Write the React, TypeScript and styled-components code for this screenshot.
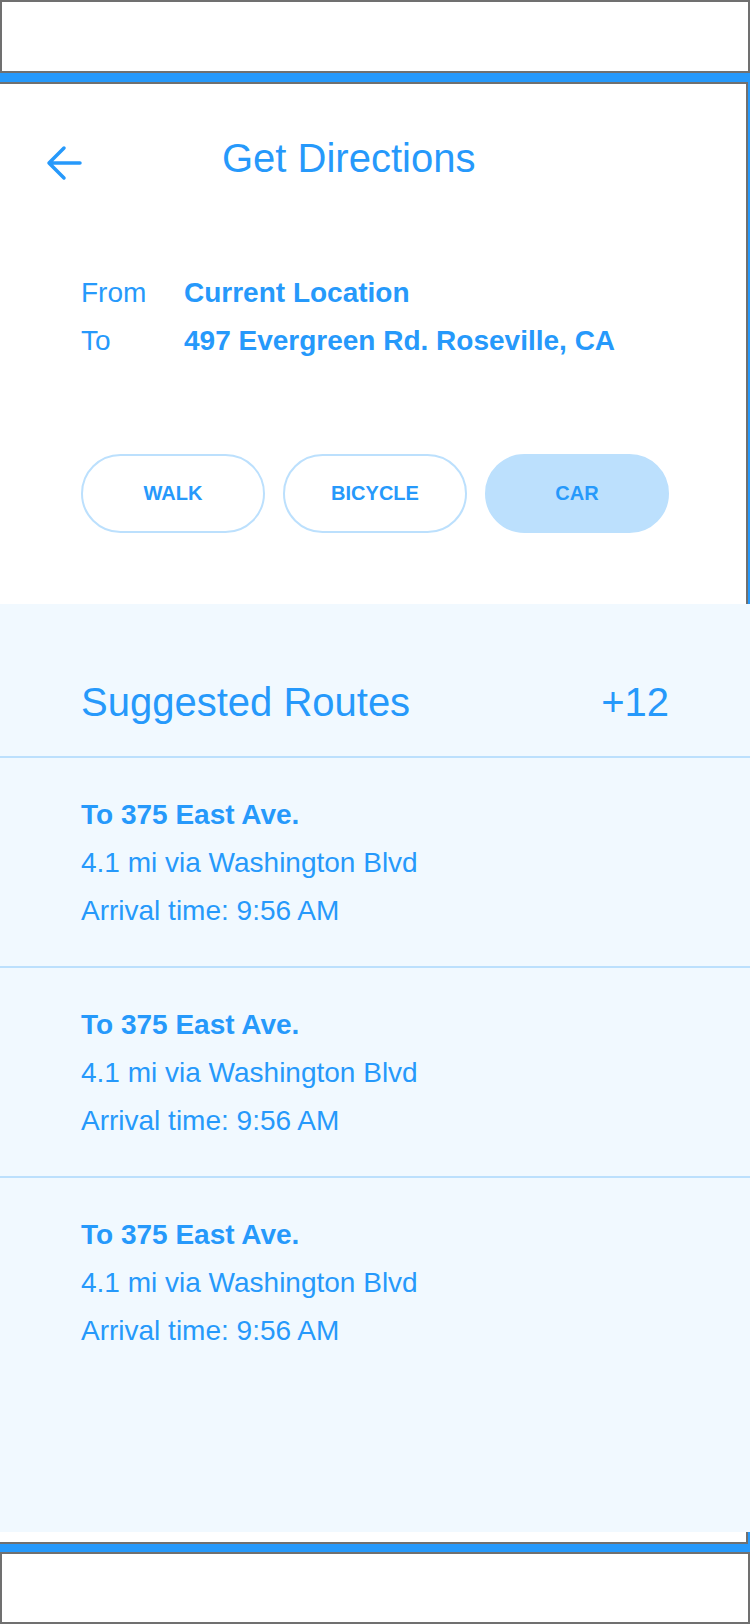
import React from "react";
import styled, { createGlobalStyle } from "styled-components";

const Global = createGlobalStyle`
  html, body { margin: 0; padding: 0; }
  body {
    background: #2699fb;
    font-family: "Liberation Sans", Arial, sans-serif;
    color: #2699fb;
    overflow-x: hidden;
  }
  * { box-sizing: border-box; }
`;

const Screen = styled.div`
  width: 750px;
  height: 1624px;
  display: flex;
  flex-direction: column;
  overflow: hidden;
`;

const Bar = styled.div<{ $h: number }>`
  flex: none;
  width: 750px;
  height: ${(p) => p.$h}px;
  background: #ffffff;
  border: 2px solid #707070;
`;

const Panel = styled.div`
  flex: none;
  width: 750px;
  height: 1462px;
  margin: 9px 0 8px -2px;
  background: #ffffff;
  border: 2px solid #707070;
  display: flex;
  flex-direction: column;
`;

const Header = styled.div`
  display: flex;
  align-items: center;
  padding: 55px 0 0 48px;
  height: 103px;
`;

const BackButton = styled.button`
  width: 36px;
  height: 36px;
  padding: 0;
  margin: 0 0 0 -2px;
  border: none;
  background: none;
  display: flex;
  cursor: pointer;
`;

const Title = styled.h1`
  margin: -11px 0 0 140px;
  font-size: 40px;
  line-height: 48px;
  font-weight: 400;
  color: #2699fb;
`;

const Addresses = styled.div`
  margin: 82px 0 0 81px;
  display: grid;
  grid-template-columns: 103px auto;
  font-size: 28px;
  line-height: 48px;
`;

const Label = styled.span`
  font-weight: 400;
`;

const Value = styled.span`
  font-weight: 700;
`;

const Modes = styled.div`
  display: flex;
  gap: 18px;
  margin: 89px 0 0 81px;
`;

const ModeButton = styled.button<{ $active?: boolean }>`
  width: 184px;
  height: 79px;
  border-radius: 40px;
  border: 2px solid #bce0fd;
  background: ${(p) => (p.$active ? "#bce0fd" : "#ffffff")};
  color: #2699fb;
  font-family: "Liberation Sans", Arial, sans-serif;
  font-size: 20px;
  font-weight: 700;
  cursor: pointer;
`;

const Routes = styled.section`
  margin: 71px -4px 0 0;
  height: 928px;
  background: #f1f9ff;
`;

const RoutesHeader = styled.div`
  display: flex;
  justify-content: space-between;
  align-items: center;
  padding: 74px 81px 30px 81px;
  font-size: 40px;
  line-height: 48px;
  border-bottom: 2px solid #bce0fd;
`;

const RoutesTitle = styled.h2`
  margin: 0;
  font-size: 40px;
  font-weight: 400;
  line-height: 48px;
`;

const Count = styled.span``;

const RouteItem = styled.div<{ $last?: boolean }>`
  padding: 33px 0 31px 81px;
  font-size: 28px;
  line-height: 48px;
  border-bottom: ${(p) => (p.$last ? "none" : "2px solid #bce0fd")};
`;

const RouteName = styled.div`
  font-weight: 700;
`;

const RouteLine = styled.div``;

const routes = [1, 2, 3];

export default function App() {
  return (
    <>
      <Global />
      <Screen>
        <Bar $h={73} />
        <Panel>
          <Header>
            <BackButton aria-label="Back">
              <svg width="36" height="36" viewBox="0 0 36 36" fill="none">
                <path
                  d="M18 3 L3 18 L18 33 M3 18 H34"
                  stroke="#2699fb"
                  strokeWidth="3.5"
                  strokeLinecap="round"
                  strokeLinejoin="round"
                />
              </svg>
            </BackButton>
            <Title>Get Directions</Title>
          </Header>
          <Addresses>
            <Label>From</Label>
            <Value>Current Location</Value>
            <Label>To</Label>
            <Value>497 Evergreen Rd. Roseville, CA</Value>
          </Addresses>
          <Modes>
            <ModeButton>WALK</ModeButton>
            <ModeButton>BICYCLE</ModeButton>
            <ModeButton $active>CAR</ModeButton>
          </Modes>
          <Routes>
            <RoutesHeader>
              <RoutesTitle>Suggested Routes</RoutesTitle>
              <Count>+12</Count>
            </RoutesHeader>
            {routes.map((r, i) => (
              <RouteItem key={r} $last={i === routes.length - 1}>
                <RouteName>To 375 East Ave.</RouteName>
                <RouteLine>4.1 mi via Washington Blvd</RouteLine>
                <RouteLine>Arrival time: 9:56 AM</RouteLine>
              </RouteItem>
            ))}
          </Routes>
        </Panel>
        <Bar $h={72} />
      </Screen>
    </>
  );
}
